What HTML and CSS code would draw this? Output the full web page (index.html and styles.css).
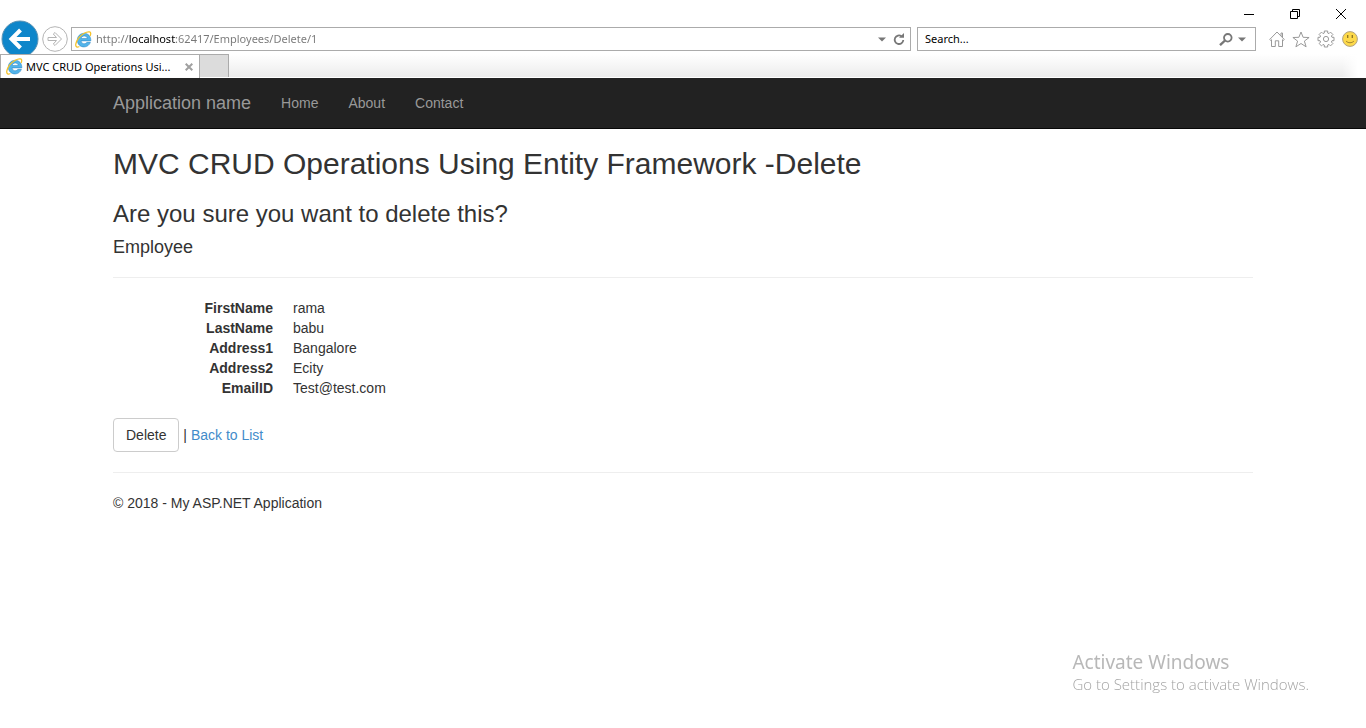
FILE: index.html
```html
<!DOCTYPE html>
<html lang="en">
<head>
<meta charset="utf-8">
<title>MVC CRUD Operations Using Entity Framework -Delete</title>
<link rel="stylesheet" href="styles.css">
</head>
<body>
<svg class="defs" aria-hidden="true">
  <symbol id="ie" viewBox="0 0 16 16">
    <path d="M14.900 9.300H5.700c.2 1.700 1.400 2.700 3 2.700 1.200 0 2-.5 2.500-1.300h3.300c-.9 2.500-3.100 4.300-6 4.300-3.700 0-6.300-2.700-6.300-6.400 0-3.700 2.700-6.400 6.300-6.400 3.900 0 6.500 2.700 6.400 7.100zM5.800 7h5.800C11.400 5.600 10.200 4.700 8.700 4.700S6 5.600 5.800 7z" fill="#52b4ea" stroke="#2585c4" stroke-width=".5"/>
    <path d="M14.200 4.600c.9-2.100.8-3.500-.6-3.800C11.100.3 6.300 2.700 3.300 6.800.6 10.600-.1 14.200 1.600 15c.6.300 1.500.1 2.500-.4" fill="none" stroke="#f5c22a" stroke-width="1.200"/>
  </symbol>
</svg>

<header class="browser">
  <div class="titlebar">
    <button class="winbtn" aria-label="Minimize"><svg width="12" height="12" viewBox="0 0 12 12"><path d="M1 6.500h10"/></svg></button>
    <button class="winbtn" aria-label="Restore"><svg width="12" height="12" viewBox="0 0 12 12"><path d="M1.500 3.500h7v7h-7zM3.500 3.500v-2h7v7h-2"/></svg></button>
    <button class="winbtn" aria-label="Close"><svg width="12" height="12" viewBox="0 0 12 12"><path d="M1 1l10 10M11 1L1 11"/></svg></button>
  </div>
  <div class="toolbar">
    <button class="round back" aria-label="Back"><svg width="38" height="38" viewBox="0 0 38 38"><circle cx="19" cy="19" r="18" fill="#0e86ca" stroke="#5b93b4"/><path d="M29 19H12M19.500 10L10.500 19l9 9" fill="none" stroke="#fff" stroke-width="4"/></svg></button>
    <button class="round forward" aria-label="Forward"><svg width="26" height="26" viewBox="0 0 26 26" fill="#fff" stroke="#b4b4b4"><circle cx="13" cy="13" r="12.300"/><path d="M6 11.500h8.500L11.300 8l1.700-1.500 6.500 6.500-6.500 6.500-1.700-1.500 3.200-3.500H6z"/></svg></button>
    <div class="field address">
      <svg class="ie" width="17" height="17"><use href="#ie"/></svg>
      <input class="url" type="text" aria-label="Address" value="http://localhost:62417/Employees/Delete/1">
      <button class="tool" aria-label="Show address list"><svg width="8" height="5" viewBox="0 0 8 5"><path d="M0 .5h8L4 4.500z" fill="#777"/></svg></button>
      <button class="tool" aria-label="Refresh"><svg width="12" height="13" viewBox="0 0 12 13"><path d="M8.500 3.200A4.300 4.300 0 1 0 10.300 7" fill="none" stroke="#777" stroke-width="1.800"/><path d="M6 4.800h5V0z" fill="#777"/></svg></button>
    </div>
    <div class="field search">
      <input class="query" type="text" aria-label="Search" placeholder="Search...">
      <button class="tool" aria-label="Search"><svg width="14" height="13" viewBox="0 0 14 13" fill="none" stroke="#777"><circle cx="8.800" cy="4.800" r="3.800" stroke-width="1.800"/><path d="M6 7.500L1 12.200" stroke-width="2.400"/></svg></button>
      <button class="tool" aria-label="Search options"><svg width="8" height="5" viewBox="0 0 8 5"><path d="M0 .5h8L4 4.500z" fill="#777"/></svg></button>
    </div>
    <div class="commands">
      <button aria-label="Home"><svg width="16" height="16" viewBox="0 0 16 16"><path d="M.7 8.500L8 1l7.300 7.500-1 .9-.8-.7v6.800H9.700V9.800H6.300v5.700H2.500V8.700l-.8.700zM12 5V2h1.500v4.500"/></svg></button>
      <button aria-label="Favorites"><svg width="18" height="17" viewBox="0 0 18 17"><path d="M9 1l2.100 5.300 6 .2-4.700 3.600 1.700 5.700L9 12.500l-5.100 3.300 1.700-5.700L.9 6.500l6-.2z"/></svg></button>
      <button aria-label="Tools"><svg width="18" height="18" viewBox="0 0 18 18"><path d="M7.300 1h3.400v2l1.300.6 1.500-1.500 2.400 2.400L14.400 6l.6 1.300h2v3.400h-2l-.6 1.300 1.500 1.500-2.400 2.400-1.500-1.500-1.300.6v2H7.300v-2L6 14.400l-1.500 1.500-2.400-2.400L3.600 12 3 10.700H1V7.300h2L3.600 6 2.100 4.500l2.400-2.400L6 3.600 7.300 3z"/><circle cx="9" cy="9" r="2.600"/></svg></button>
      <button aria-label="Send a smile"><svg width="16" height="16" viewBox="0 0 16 16"><circle cx="8" cy="8" r="7.400" fill="#fdd94a" stroke="#b0a284"/><path d="M5.700 4v3M10.300 4v3" stroke="#8a7322" stroke-width="1.300"/><path d="M4 10c2 2.300 6 2.300 8 0" stroke="#a08430" fill="none"/></svg></button>
    </div>
  </div>
  <div class="tabs">
    <div class="tab">
      <svg class="ie" width="17" height="17"><use href="#ie"/></svg>
      <span class="tab-title">MVC CRUD Operations Usi...</span>
      <button class="tab-close" aria-label="Close tab"><svg width="8" height="8" viewBox="0 0 8 8"><path d="M.7.7l6.600 6.600M7.300.7L.7 7.300" stroke="#a0a0a0" stroke-width="2"/></svg></button>
    </div>
    <button class="newtab" aria-label="New tab"></button>
    <div class="strip"></div>
  </div>
</header>

<nav class="navbar">
  <div class="container nav-inner">
    <a class="brand" href="#">Application name</a>
    <a class="navlink" href="#">Home</a>
    <a class="navlink" href="#">About</a>
    <a class="navlink" href="#">Contact</a>
  </div>
</nav>

<main class="container">
  <h2>MVC CRUD Operations Using Entity Framework -Delete</h2>
  <h3>Are you sure you want to delete this?</h3>
  <h4>Employee</h4>
  <hr>
  <dl class="details">
    <dt>FirstName</dt><dd>rama</dd>
    <dt>LastName</dt><dd>babu</dd>
    <dt>Address1</dt><dd>Bangalore</dd>
    <dt>Address2</dt><dd>Ecity</dd>
    <dt>EmailID</dt><dd>Test@test.com</dd>
  </dl>
  <form class="actions">
    <button class="btn" type="button">Delete</button> | <a class="link" href="#">Back to List</a>
  </form>
  <hr>
  <footer>© 2018 - My ASP.NET Application</footer>
</main>

<aside class="watermark">
  <p class="wm-title">Activate Windows</p>
  <p class="wm-text">Go to Settings to activate Windows.</p>
</aside>
</body>
</html>
```

FILE: styles.css
```css
* { box-sizing: border-box; }
body {
  margin: 0;
  background: #fff;
  color: #333;
  font: 14px/20px "Liberation Sans", Arial, sans-serif;
}
svg { display: block; flex: none; }
button { border: 0; padding: 0; background: none; font: inherit; color: inherit; }
.defs { position: absolute; width: 0; height: 0; }

/* Browser frame */
.browser { font: 11px/16px "Noto Sans", sans-serif; color: #000; }
.titlebar { display: flex; justify-content: flex-end; gap: 34px; height: 27px; padding: 8px 19px 0 0; align-items: flex-start; }
.winbtn svg { fill: none; stroke: #000; }
.toolbar { display: flex; align-items: center; height: 24px; margin-bottom: 3px; padding: 0 8px 0 1px; }
.forward { margin: 0 3px; }
.field { display: flex; align-items: center; height: 24px; border: 1px solid #ababab; background: #fff; }
.field input { flex: 1; min-width: 0; border: 0; padding: 0; background: none; font: inherit; line-height: 20px; outline: 0; }
.address { flex: 1; padding: 0 5px 0 3px; gap: 4px; }
/* The host name is darker than the rest of the address */
.field .url {
  color: transparent;
  background: linear-gradient(90deg, #777 33px, #000 33px, #000 80px, #777 80px);
  background-clip: text;
  -webkit-background-clip: text;
}
.address .tool + .tool { margin-left: 3px; }
.search { flex: 0 0 339px; margin-left: 6px; padding: 0 9px 0 7px; gap: 5px; }
.query::placeholder { color: #000; opacity: 1; }
.commands { display: flex; align-items: center; gap: 7px; margin-left: 13px; }
.commands svg { fill: none; stroke: #999; }
.tabs { position: relative; display: flex; height: 24px; }
.tab { display: flex; align-items: center; gap: 3px; width: 200px; padding: 0 6px 0 5px; background: #fff; border: 1px solid #ababab; border-bottom: 0; }
.tab-title { flex: 1; white-space: nowrap; }
.newtab { width: 29px; height: 23px; background: #dcdcdc; border: 1px solid #ababab; border-left: 0; border-bottom: 0; }
.strip { flex: 1; height: 23px; margin-right: 8px; background: linear-gradient(90deg, transparent calc(100% - 16px), #fff), linear-gradient(#fff, #ececec); }

/* Page */
.container { max-width: 1170px; margin: 0 auto; padding: 0 15px; }
.navbar { background: #222; border-bottom: 1px solid #080808; }
.nav-inner { display: flex; gap: 30px; }
.nav-inner a { color: #999; text-decoration: none; padding: 15px 0; }
.nav-inner .brand { font-size: 18px; }
h2, h3, h4 { margin: 20px 0 10px; font-weight: normal; }
h2 { font-size: 30px; line-height: 34px; margin-top: 18px; }
h3 { font-size: 24px; line-height: 26px; }
h4 { font-size: 18px; line-height: 20px; margin: 10px 0; }
hr { border: 0; border-top: 1px solid #eee; margin: 20px 0; }
.details { display: grid; grid-template-columns: 160px 1fr; column-gap: 20px; margin: 0 0 20px; }
dt { font-weight: bold; text-align: right; }
dd { margin: 0; }
.btn { height: 34px; padding: 6px 12px; border: 1px solid #ccc; border-radius: 4px; background: #fff; }
.link { color: #428bca; text-decoration: none; }

.watermark { position: fixed; right: 57px; bottom: 34px; color: #b8b8b8; font-family: "Noto Sans", sans-serif; }
.watermark p { margin: 0; }
.wm-title { font-size: 19px; line-height: 24px; }
.wm-text { font: 300 15px/20px "Open Sans", sans-serif; color: #a4a4a4; }
```
